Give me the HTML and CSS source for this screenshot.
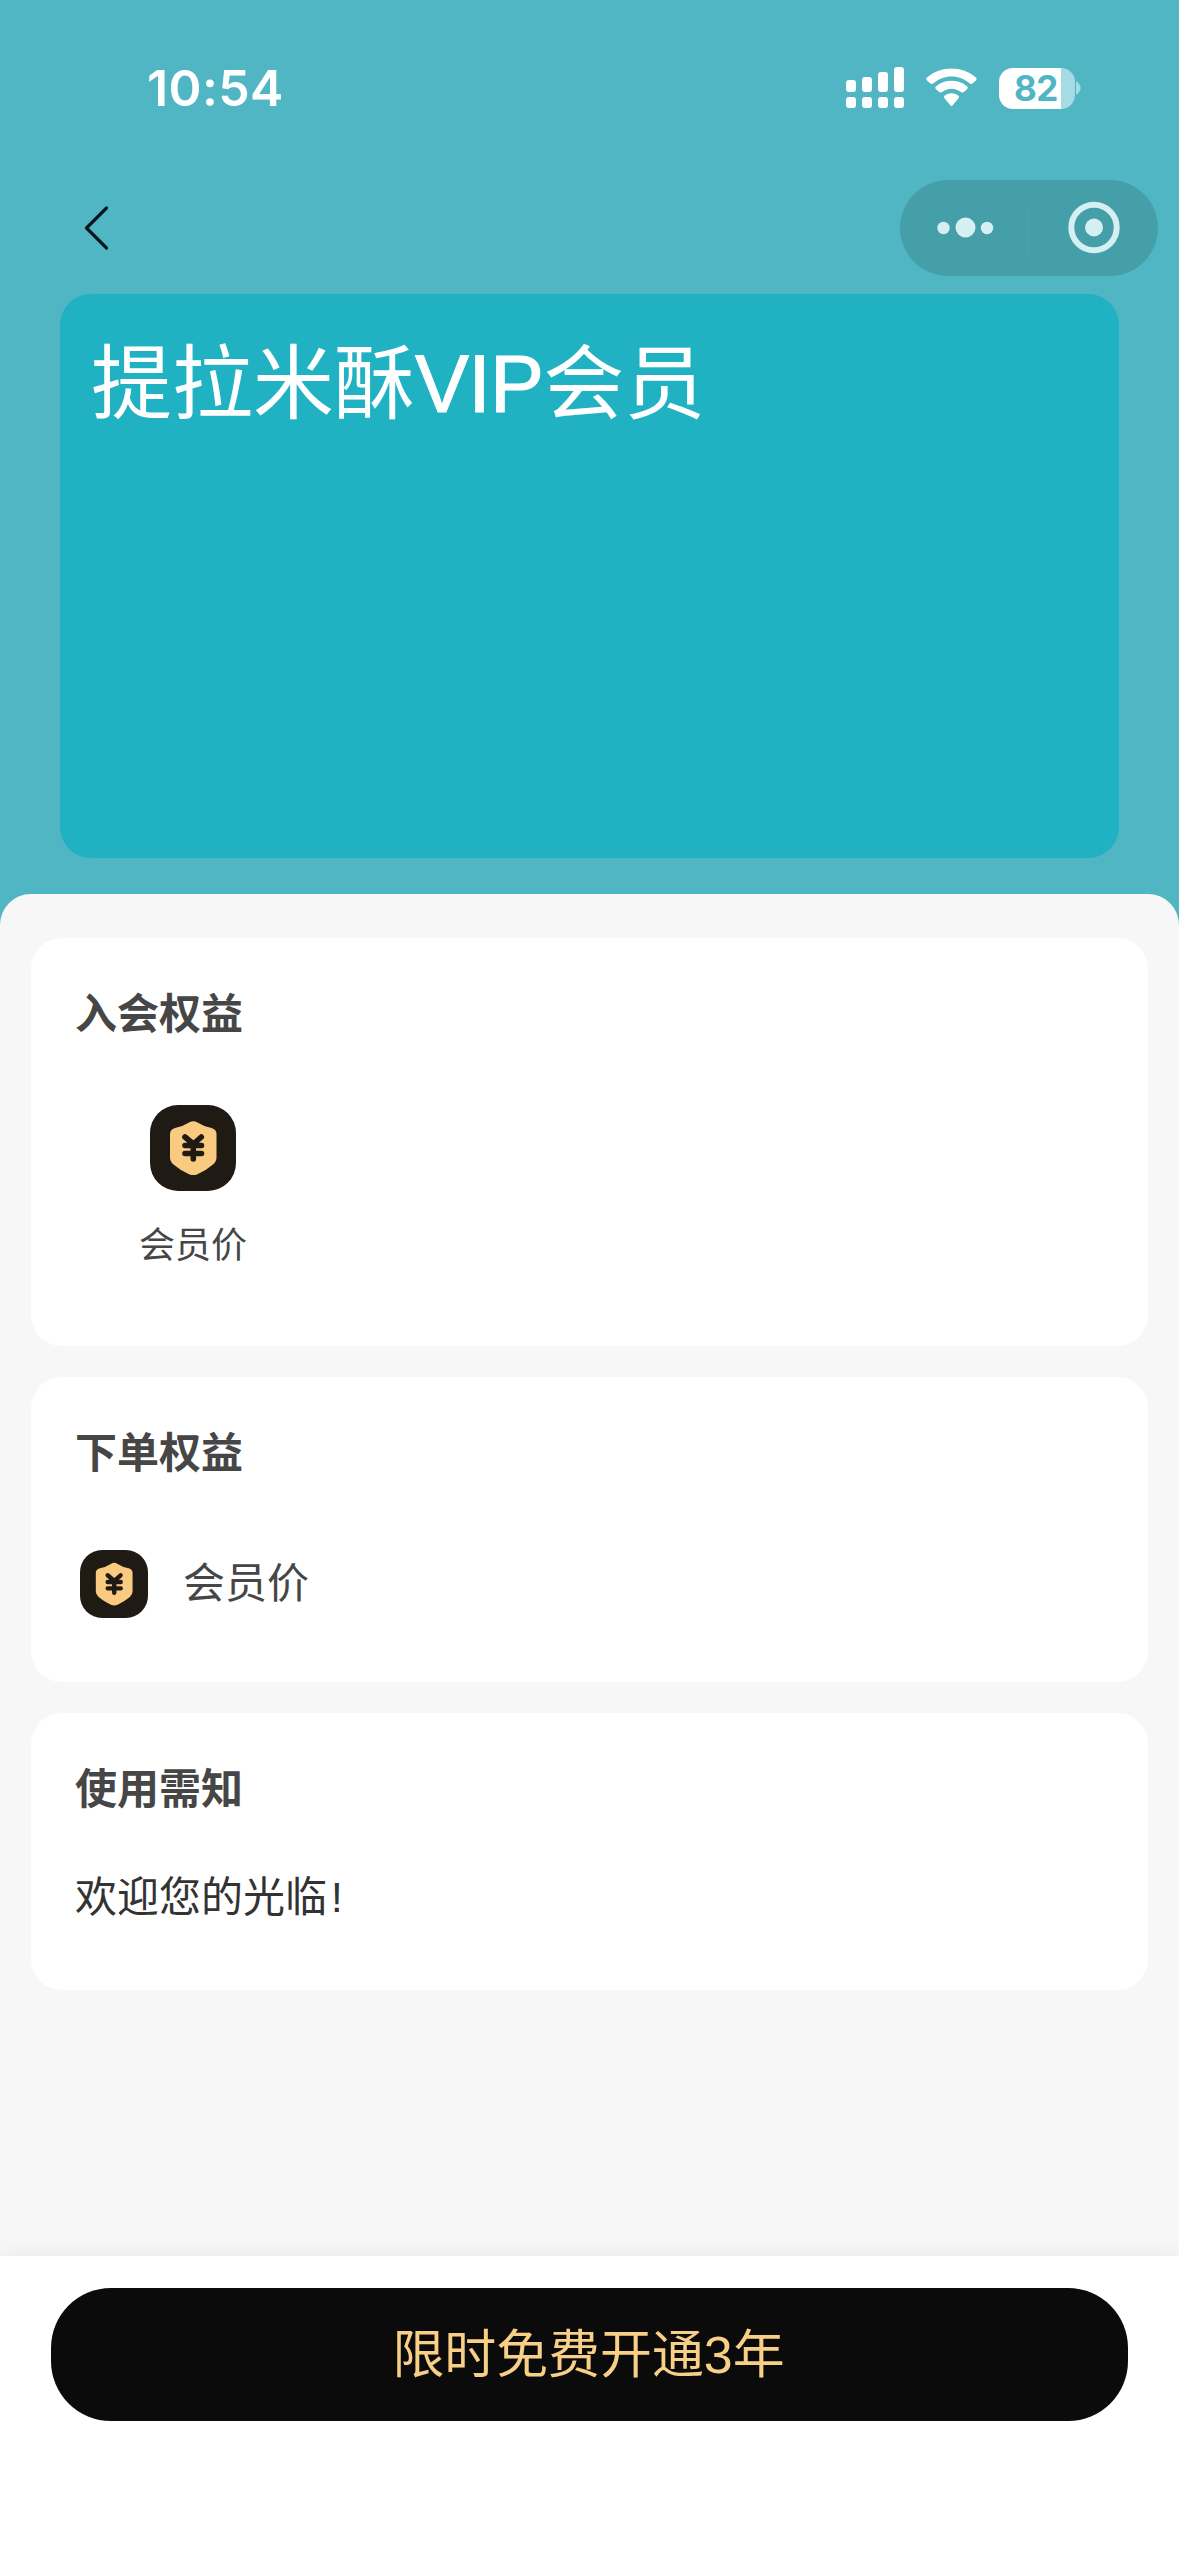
FILE: index.html
```html
<!DOCTYPE html>
<html lang="zh-CN">
<head>
<meta charset="utf-8">
<title>提拉米酥VIP会员</title>
<link rel="stylesheet" href="styles.css">
</head>
<body>
<svg width="0" height="0" class="defs">
  <symbol id="member-price" viewBox="0 0 86 86">
    <rect width="86" height="86" rx="28" fill="#201a14"/>
    <path d="M39.500 17.300Q43.300 15 47 17.300Q53.500 21.500 61.500 23Q66.500 24.500 66.500 29V52.500Q66.500 56.500 63 59.500Q56 65.500 47.500 69.200Q43.300 71 39 69.200Q30.500 65.500 23.500 59.500Q20 56.500 20 52.500V29Q20 24.500 25 23Q33 21.500 39.500 17.300Z" fill="#f8cb80"/>
    <path d="M35 32l8.300 7 8-7M35 40.500h16.500M35 48.500h16.500M43.300 39v15" fill="none" stroke="#201a14" stroke-width="5.600" stroke-linecap="round" stroke-linejoin="round"/>
  </symbol>
</svg>
<div class="page">
  <header class="hero">
    <div class="status">
      <span class="time">10:54</span>
      <div class="indicators">
        <svg class="signal" width="58" height="42" viewBox="0 0 58 42" fill="#fff">
          <rect x="0" y="13" width="10" height="12" rx="3"/><rect x="16" y="10" width="10" height="15" rx="3"/><rect x="32" y="5" width="10" height="20" rx="3"/><rect x="48" y="0" width="10" height="25" rx="3"/>
          <rect x="0" y="30" width="10" height="11" rx="3"/><rect x="16" y="30" width="10" height="11" rx="3"/><rect x="32" y="30" width="10" height="11" rx="3"/><rect x="48" y="30" width="10" height="11" rx="3"/>
        </svg>
        <svg class="wifi" width="51" height="42" viewBox="0 0 51 42" fill="#fff">
          <path d="M1 13.500Q-.5 12 1 10.500C15-1.500 36-1.500 50 10.500Q51 12 50 13.500L46.500 16.600Q45.300 17.500 44 16.500C33 7 18 7 7 16.500Q5.700 17.500 4.500 16.600Z"/>
          <path d="M9.700 22Q8.500 20.600 10 19.300C19 12 32 12 41 19.300Q42.500 20.600 41.300 22L37.500 25.200Q36.400 26 35.200 25.200C29.500 20.500 21.500 20.500 15.800 25.200Q14.600 26 13.500 25.200Z"/>
          <path d="M18.300 31Q17.300 29.600 18.800 28.600C23 25.600 28 25.600 32.200 28.600Q33.700 29.600 32.700 31L26.500 38.500Q25.500 39.500 24.500 38.500Z"/>
        </svg>
        <div class="battery"><span class="level">82</span></div>
        <svg class="nub" width="6" height="14" viewBox="0 0 6 14"><path d="M0 0Q4.500 3 4.500 7T0 14Z" fill="#a5dce3"/></svg>
      </div>
    </div>
    <nav class="nav">
      <svg class="back" width="26" height="48" viewBox="0 0 26 48"><path d="M22.500 4L2.500 24l20 20" fill="none" stroke="#07191c" stroke-width="3.200" stroke-linecap="round" stroke-linejoin="round"/></svg>
      <svg class="capsule" width="258" height="96" viewBox="0 0 258 96">
        <rect width="258" height="96" rx="48" fill="#459fa8"/>
        <path d="M128.500 28v48" stroke="#4ba4ad" stroke-width="1.500"/>
        <g fill="#d5eff3"><circle cx="43.500" cy="48" r="6.200"/><circle cx="65.500" cy="47.500" r="10"/><circle cx="87" cy="48" r="6.200"/><circle cx="194" cy="47.500" r="9"/></g>
        <circle cx="194" cy="47.500" r="22.700" fill="none" stroke="#d5eff3" stroke-width="6"/>
      </svg>
    </nav>
    <section class="vip-card"><h1>提拉米酥<span class="latin">VIP</span>会员</h1></section>
  </header>
  <main class="sheet">
    <section class="panel panel-join">
      <h2>入会权益</h2>
      <div class="benefit">
        <svg class="icon-large"><use href="#member-price"/></svg>
        <span>会员价</span>
      </div>
    </section>
    <section class="panel panel-order">
      <h2>下单权益</h2>
      <div class="benefit-row">
        <svg class="icon-small"><use href="#member-price"/></svg>
        <span>会员价</span>
      </div>
    </section>
    <section class="panel panel-notice">
      <h2>使用需知</h2>
      <p>欢迎您的光临<span class="mark">!</span></p>
    </section>
  </main>
  <footer class="bar"><button class="open">限时免费开通3年</button></footer>
</div>
</body>
</html>
```
FILE: styles.css
```css
* { box-sizing: border-box; }
body, h1, h2, p { margin: 0; }
body {
  background: #fff;
  font-family: "Liberation Sans", "Noto Sans CJK SC", sans-serif;
  color: #464646;
}
.defs { display: block; height: 0; }
.page {
  width: 1179px;
  height: 2556px;
  display: flex;
  flex-direction: column;
  background: #50b6c3;
  overflow: hidden;
}
.hero { height: 894px; flex: none; }
.status {
  height: 176px;
  padding: 0 98px 0 147px;
  display: flex;
  align-items: center;
  justify-content: space-between;
}
.time {
  font: 600 50px/60px Inter, sans-serif;
  letter-spacing: 0.4px;
  color: #fff;
}
.indicators { display: flex; align-items: center; }
.wifi { margin-left: 22px; }
.battery {
  width: 76px;
  height: 41px;
  margin-left: 22px;
  border-radius: 14px;
  background: linear-gradient(to right, #fff 62px, #a5dce3 62px);
  display: flex;
  align-items: center;
}
.level {
  margin-left: 15px;
  font: 700 35px/41px Inter, sans-serif;
  color: #50b6c3;
  letter-spacing: -0.5px;
}
.nub { margin-left: 1px; margin-right: -1px; }
.nav {
  height: 118px;
  padding: 4px 21px 0 84px;
  display: flex;
  align-items: flex-start;
  justify-content: space-between;
}
.back { margin-top: 24px; }
.vip-card {
  height: 564px;
  margin: 0 60px;
  padding: 36px 31px;
  border-radius: 31px;
  background: #20b2c3;
}
h1 {
  font-size: 81px;
  font-weight: 400;
  line-height: 108px;
  color: #fff;
}
.latin {
  letter-spacing: -0.8px;
  -webkit-text-stroke: 1px #fff;
}
.sheet {
  flex: 1;
  padding: 44px 31px 0;
  display: flex;
  flex-direction: column;
  gap: 31px;
  border-radius: 31px 31px 0 0;
  background: #f7f7f7;
}
.panel {
  padding: 47px 45px 0 44px;
  border-radius: 31px;
  background: #fff;
}
.panel-join { height: 408px; }
.panel-order { height: 305px; }
.panel-notice { height: 277px; }
h2 {
  font-size: 42px;
  font-weight: 700;
  line-height: 60px;
}
.benefit {
  width: 234px;
  margin-top: 60px;
  margin-left: 1px;
  display: flex;
  flex-direction: column;
  align-items: center;
  gap: 30px;
  font-size: 36px;
  line-height: 50px;
}
.icon-large { width: 86px; height: 86px; }
.benefit-row {
  margin-top: 66px;
  padding-left: 5px;
  display: flex;
  align-items: center;
  gap: 35px;
  font-size: 42px;
  line-height: 60px;
}
.icon-small { width: 68px; height: 68px; }
.panel-notice p {
  margin-top: 48px;
  font-size: 42px;
  line-height: 60px;
  color: #333;
}
.mark { margin-left: 4px; }
.bar {
  height: 300px;
  flex: none;
  padding: 32px 51px;
  background: #fff;
  box-shadow: 0 0 24px rgba(0, 0, 0, 0.07);
}
.open {
  display: block;
  width: 100%;
  height: 133px;
  padding: 0 2px 0 0;
  border: 0;
  border-radius: 60px;
  background: #0b0b0b;
  color: #f8cf87;
  font: 400 51.9px/70px "Liberation Sans", "Noto Sans CJK SC", sans-serif;
}
```
